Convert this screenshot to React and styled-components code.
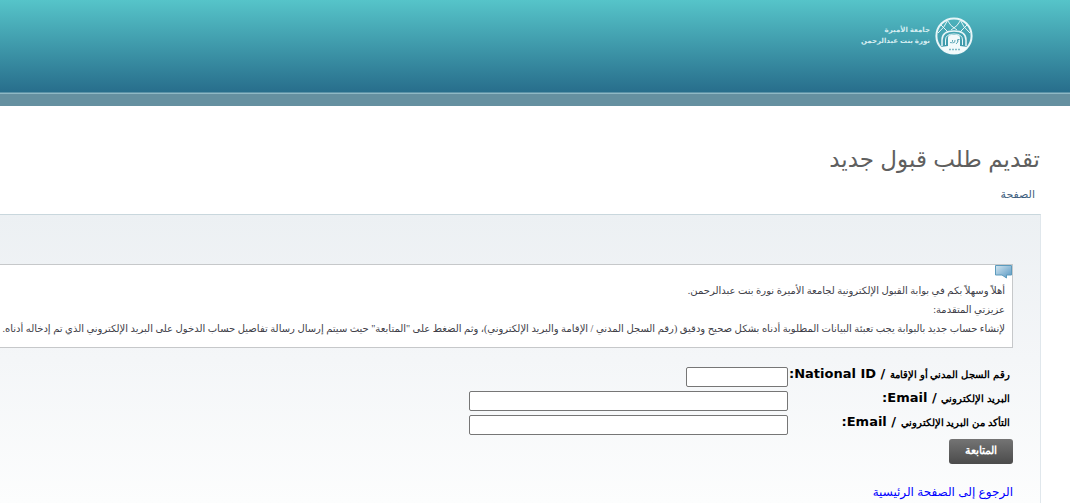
import React from "react";
import styled, { createGlobalStyle } from "styled-components";

const App = () => (
  <Page>
    <GlobalStyle />
    <Header>
      <Brand href="#">
        <Emblem />
        <BrandName>
          <span>جامعة الأميرة</span>
          <span>نورة بنت عبدالرحمن</span>
        </BrandName>
      </Brand>
    </Header>
    <Main>
      <Title>تقديم طلب قبول جديد</Title>
      <Breadcrumb>
        <a href="#">الصفحة</a>
      </Breadcrumb>
      <Panel>
        <Message>
          <BubbleIcon />
          <p>أهلاً وسهلاً بكم في بوابة القبول الإلكترونية لجامعة الأميرة نورة بنت عبدالرحمن.</p>
          <p>عزيزتي المتقدمة:</p>
          <p>
            لإنشاء حساب جديد بالبوابة يجب تعبئة البيانات المطلوبة أدناه بشكل صحيح ودقيق (رقم السجل
            المدني / الإقامة والبريد الإلكتروني)، وثم الضغط على "المتابعة" حيث سيتم إرسال رسالة
            تفاصيل حساب الدخول على البريد الإلكتروني الذي تم إدخاله أدناه.
          </p>
        </Message>
        <Form onSubmit={event => event.preventDefault()}>
          {fields.map(({ id, arabic, english, width, type }) => (
            <React.Fragment key={id}>
              <Label htmlFor={id}>
                <ArabicLabel>{arabic}</ArabicLabel> / {english}:
              </Label>
              <Input id={id} type={type} $width={width} />
            </React.Fragment>
          ))}
          <SubmitButton type="submit">المتابعة</SubmitButton>
        </Form>
        <HomeLink href="#">الرجوع إلى الصفحة الرئيسية</HomeLink>
      </Panel>
    </Main>
  </Page>
);

const fields = [
  {
    id: "nationalId",
    arabic: "رقم السجل المدني أو الإقامة",
    english: "National ID",
    width: 102,
    type: "text"
  },
  { id: "email", arabic: "البريد الإلكتروني", english: "Email", width: 319, type: "email" },
  {
    id: "emailConfirm",
    arabic: "التأكد من البريد الإلكتروني",
    english: "Email",
    width: 319,
    type: "email"
  }
];

const Emblem = () => (
  <svg width="38" height="38" viewBox="0 0 38 38" fill="none" stroke="#e8f6f8" aria-hidden="true">
    <circle cx="19" cy="19" r="17.6" strokeWidth="2" />
    <path
      d="M12.5 3.5Q15 9 22 13M25.5 3.5Q23 9 16 13M6 8l7 7M32 8l-7 7M12.5 3.5Q10 10 3 16M25.5 3.5Q28 10 35 16"
      strokeWidth="1"
    />
    <path d="M7 29v-6q0-9 12-9t12 9v6" strokeWidth="1.5" />
    <path d="M10.5 28v-5q0-6 8.5-6t8.5 6v5" strokeWidth="1" />
    <path d="M13 29v-8q0-3 3-3h6q3 0 3 3v8l8 1q-5 7-14 7T5 30z" fill="#f2fafb" stroke="none" />
    <path
      d="M15 25.5q3 1 2.5-2.5m0 3q3 0 2.5-3m1 4q3-2 1.5-4.5m2 0q-2-1-2 2"
      stroke="#4f9fb0"
      strokeWidth="0.9"
    />
    <path d="M14 32.5h2m1 0h2m1 0h2m1 0h2" stroke="#7fbac6" strokeWidth="1.5" />
  </svg>
);

const BubbleIcon = () => (
  <Bubble width="17" height="14" viewBox="0 0 17 14" aria-hidden="true">
    <defs>
      <linearGradient id="bubbleFill" x1="0" y1="0" x2="1" y2="1">
        <stop offset="0" stopColor="#d3e6f0" />
        <stop offset="1" stopColor="#5596c2" />
      </linearGradient>
    </defs>
    <path d="M.5.5h16v9.5h-5v3L7 10H.5z" fill="url(#bubbleFill)" stroke="#5c9bbd" />
  </Bubble>
);

const GlobalStyle = createGlobalStyle`
  body {
    margin: 0;
    background: #fff;
    direction: rtl;
    font-family: "Liberation Sans", "DejaVu Sans", sans-serif;
  }
`;

const Page = styled.div`
  display: flex;
  flex-direction: column;
  min-height: 100vh;
`;

const Header = styled.header`
  display: flex;
  height: 106px;
  padding: 17px 97px 0;
  box-sizing: border-box;
  border-bottom: 12px solid #6590a0;
  background: linear-gradient(#56c4c9, #286e8c 92px, #8fb8c4 93px);
`;

const Brand = styled.a`
  display: flex;
  gap: 5px;
  align-items: flex-start;
  height: 38px;
  color: #d5edf1;
  text-decoration: none;
`;

const BrandName = styled.span`
  display: flex;
  flex-direction: column;
  padding-top: 7px;
  font-size: 7px;
  font-weight: bold;
  line-height: 11px;
  white-space: nowrap;
`;

const Main = styled.main`
  display: flex;
  flex: 1;
  flex-direction: column;
  padding-right: 29px;
`;

const Title = styled.h1`
  margin: 0;
  padding: 35px 1px 0;
  color: #5f5f5f;
  font-size: 23px;
  font-weight: normal;
  line-height: 36px;
`;

const Breadcrumb = styled.nav`
  padding: 8px 6px 11px;
  font-size: 11px;
  line-height: 18px;

  a {
    color: #3f5f80;
    text-decoration: none;
  }
`;

const Panel = styled.section`
  flex: 1;
  padding: 49px 27px 0 0;
  border-top: 1px solid #c9d7dd;
  border-right: 1px solid #e0e7ec;
  background: linear-gradient(#ecf0f3, #f4f6f8 50%, #fcfdfd);
`;

const Message = styled.div`
  position: relative;
  padding: 16px 7px 9px 0;
  border: 1px solid #c6c8ca;
  border-left: none;
  background: #fff;
  color: #404048;
  font-family: "Liberation Serif", "DejaVu Sans", serif;
  font-size: 10px;
  line-height: 19px;
  white-space: nowrap;

  p {
    margin: 0;
  }
`;

const Bubble = styled.svg`
  position: absolute;
  top: 0;
  right: 0;
`;

const Form = styled.form`
  display: grid;
  grid-template-columns: 222px auto;
  gap: 4px 3px;
  justify-content: start;
  padding-top: 19px;
`;

const Label = styled.label`
  padding-right: 3px;
  color: #000;
  font-family: "DejaVu Sans", sans-serif;
  font-size: 13px;
  font-weight: bold;
  line-height: 13px;
  white-space: nowrap;
`;

const ArabicLabel = styled.span`
  font-family: "Liberation Sans", sans-serif;
  font-size: 10px;
`;

const Input = styled.input`
  width: ${props => props.$width}px;
  height: 20px;
  box-sizing: border-box;
  border: 1px solid #767676;
  border-radius: 2px;
  background: #fff;
`;

const SubmitButton = styled.button`
  justify-self: start;
  width: 64px;
  height: 25px;
  padding: 0 0 3px;
  border: none;
  border-radius: 3px;
  background: linear-gradient(#747474, #4b4b4b);
  color: #fff;
  font-family: "Liberation Sans", sans-serif;
  font-size: 11px;
  font-weight: bold;
`;

const HomeLink = styled.a`
  display: inline-block;
  margin-top: 18px;
  color: #00f;
  font-size: 12px;
  line-height: 20px;
  text-decoration: none;
`;

export default App;
